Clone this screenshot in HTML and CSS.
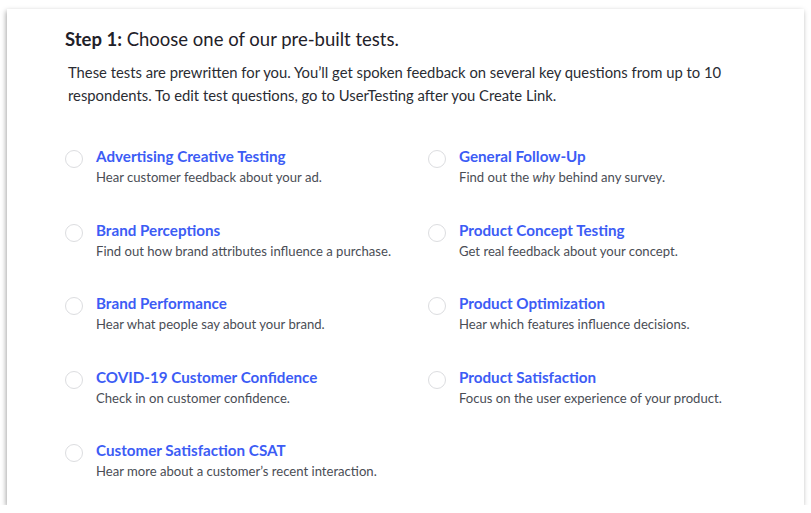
FILE: index.html
```html
<!DOCTYPE html>
<html>
<head>
<meta charset="utf-8">
<link rel="stylesheet" href="styles.css">
</head>
<body>
<div class="card">
  <h1 class="heading"><strong>Step 1:</strong> Choose one of our pre-built tests.</h1>
  <p class="intro">These tests are prewritten for you. You’ll get spoken feedback on several key questions from up to 10 respondents. To edit test questions, go to UserTesting after you Create Link.</p>
  <div class="grid">
    <label class="item"><span class="radio"></span><span class="text"><span class="title">Advertising Creative Testing</span><span class="desc">Hear customer feedback about your ad.</span></span></label>
    <label class="item"><span class="radio"></span><span class="text"><span class="title">General Follow-Up</span><span class="desc">Find out the <em>why</em> behind any survey.</span></span></label>
    <label class="item"><span class="radio"></span><span class="text"><span class="title">Brand Perceptions</span><span class="desc">Find out how brand attributes influence a purchase.</span></span></label>
    <label class="item"><span class="radio"></span><span class="text"><span class="title">Product Concept Testing</span><span class="desc">Get real feedback about your concept.</span></span></label>
    <label class="item"><span class="radio"></span><span class="text"><span class="title">Brand Performance</span><span class="desc">Hear what people say about your brand.</span></span></label>
    <label class="item"><span class="radio"></span><span class="text"><span class="title">Product Optimization</span><span class="desc">Hear which features influence decisions.</span></span></label>
    <label class="item"><span class="radio"></span><span class="text"><span class="title">COVID-19 Customer Confidence</span><span class="desc">Check in on customer confidence.</span></span></label>
    <label class="item"><span class="radio"></span><span class="text"><span class="title">Product Satisfaction</span><span class="desc">Focus on the user experience of your product.</span></span></label>
    <label class="item"><span class="radio"></span><span class="text"><span class="title">Customer Satisfaction CSAT</span><span class="desc">Hear more about a customer’s recent interaction.</span></span></label>
  </div>
</div>
</body>
</html>
```
FILE: styles.css
```css
html, body {
  margin: 0;
  padding: 0;
  background: #ffffff;
}
body {
  font-family: "Lato", "Liberation Sans", sans-serif;
  color: #3a3d45;
}
.card {
  box-sizing: border-box;
  margin: 9px 7px 0 7px;
  width: 797px;
  height: 496px;
  background: #fff;
  box-shadow: -1px 2px 5px rgba(0, 0, 0, 0.35);
  padding: 17px 0 0 58px;
}
.heading {
  margin: 0;
  font-size: 18.5px;
  line-height: 26px;
  font-weight: 400;
  color: #1f2129;
}
.heading strong {
  font-weight: 700;
}
.intro {
  margin: 9px 0 0 3px;
  width: 700px;
  font-size: 14.8px;
  line-height: 23px;
  color: #2a2c33;
}
.grid {
  display: grid;
  grid-template-columns: 363px 363px;
  grid-auto-rows: 73.5px;
  margin-top: 39px;
}
.item {
  display: flex;
  align-items: flex-start;
  gap: 13px;
}
.radio {
  flex: none;
  box-sizing: border-box;
  width: 18px;
  height: 18px;
  margin-top: 4px;
  border-radius: 50%;
  border: 1px solid #dcdde0;
  background: #fff;
}
.text {
  display: flex;
  flex-direction: column;
}
.title {
  font-size: 15.2px;
  line-height: 21px;
  font-weight: 700;
  color: #3c5cf5;
}
.desc {
  font-size: 13.1px;
  line-height: 21px;
  color: #4a4d55;
}
```
